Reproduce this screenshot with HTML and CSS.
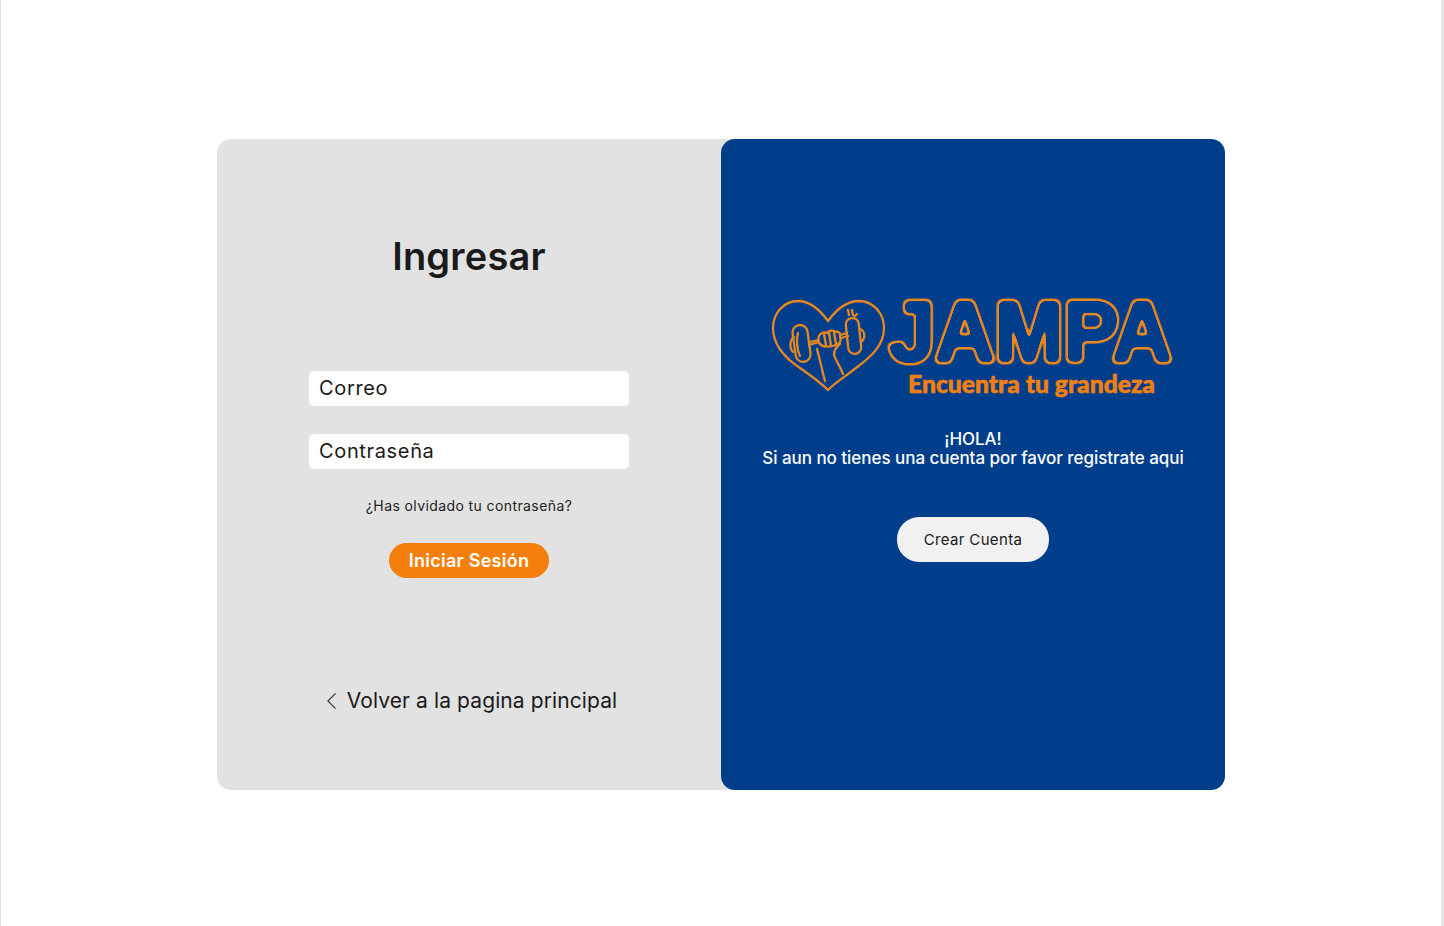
FILE: index.html
```html
<!DOCTYPE html>
<html lang="es">
<head>
<meta charset="utf-8">
<title>Ingresar - Jampa</title>
<link rel="stylesheet" href="styles.css">
</head>
<body>
<main class="page">
  <section class="card">
    <div class="panel-left">
      <h1 class="title">Ingresar</h1>
      <form class="form">
        <input class="field" type="text" placeholder="Correo">
        <input class="field" type="password" placeholder="Contraseña">
        <a class="forgot" href="#">¿Has olvidado tu contraseña?</a>
        <button class="btn-login" type="button">Iniciar Sesión</button>
      </form>
      <a class="back" href="#">
        <svg class="back-icon" viewBox="0 0 12 20"><path d="M10.500 1.500 2 10l8.500 8.500"/></svg>
        <span>Volver a la pagina principal</span>
      </a>
    </div>
    <div class="panel-right">
      <svg class="logo" viewBox="770 295 410 108">
        <defs>
          <filter id="bubble" x="-5%" y="-20%" width="110%" height="140%" color-interpolation-filters="sRGB">
            <feGaussianBlur in="SourceAlpha" stdDeviation="2.600" result="soft"/>
            <feComponentTransfer in="soft" result="outer"><feFuncA type="linear" slope="14" intercept="-0.500"/></feComponentTransfer>
            <feComponentTransfer in="soft" result="inner"><feFuncA type="linear" slope="14" intercept="-4"/></feComponentTransfer>
            <feComposite in="outer" in2="inner" operator="out" result="ring"/>
            <feFlood flood-color="#e8861f"/>
            <feComposite in2="ring" operator="in"/>
          </filter>
        </defs>
        <g class="logo-line">
          <path d="M828 321C820 310 810 301 798 301C784 301 773 313 773 328C773 345 785 358 800 368C810 375 820 382 828 390C836 382 846 376 856 368C872 356 884 345 884 328C884 313 873 301 859 301C846 301 836 310 828 321Z"/>
          <rect x="794" y="325" width="15" height="37" rx="7.500" transform="rotate(-8 801 343)"/>
          <path d="M798 333C796 339 797 350 800 356"/>
          <path d="M794 337C790 339 789 348 793 352"/>
          <rect x="847" y="318" width="13" height="36" rx="6.500" transform="rotate(-6 853 336)"/>
          <path d="M860 329C865 331 866 338 861 342"/>
          <path d="M809 345 819 342M810 342 818 340M840 335 847 333M841 338 848 336"/>
          <path d="M819 336C821 332 825 332 827 333C829 330 834 330 836 332C839 331 841 334 840 337C842 341 839 344 836 345C830 347 824 347 821 345C818 343 818 339 819 336Z"/>
          <path d="M824 334 826 345M829 332 831 346M834 332 836 344"/>
          <path d="M817 349C820 360 822 370 825 381M840 344C836 347 834 350 834 355C836 361 840 366 843 374"/>
          <path d="M848 310 849 315M852 310 853 315M857 314 855 316"/>
        </g>
        <text class="jampa" x="889" y="361" textLength="283" lengthAdjust="spacingAndGlyphs" filter="url(#bubble)">JAMPA</text>
        <text class="slogan" x="908" y="393" textLength="247" lengthAdjust="spacingAndGlyphs">Encuentra tu grandeza</text>
      </svg>
      <p class="greeting">¡HOLA!<br>Si aun no tienes una cuenta por favor registrate aqui</p>
      <button class="btn-create" type="button">Crear Cuenta</button>
    </div>
  </section>
</main>
</body>
</html>
```
FILE: styles.css
```css
* { box-sizing: border-box; }
html, body { margin: 0; height: 100%; background: #fff; overflow: hidden; }
body { font-family: Inter, "Open Sans", sans-serif; color: #1a1a1a; }
.page {
  height: 926px;
  display: flex;
  justify-content: center;
  align-items: flex-start;
  padding-top: 139px;
  border-left: 1px solid #e3e3e3;
  border-right: 3px solid #e6e6e6;
}
.card {
  width: 1008px;
  height: 651px;
  display: flex;
}
.panel-left {
  flex: none;
  width: 518px;
  margin-right: -14px;
  padding: 94px 14px 0 0;
  background: #e2e2e2;
  border-radius: 14px 0 0 14px;
  display: flex;
  flex-direction: column;
  align-items: center;
}
.title {
  margin: 0;
  font-size: 38px;
  line-height: 46px;
  font-weight: 600;
  letter-spacing: .2px;
}
.form {
  display: flex;
  flex-direction: column;
  align-items: center;
  margin-top: 92px;
}
.field {
  width: 320px;
  height: 35px;
  border: 0;
  border-radius: 5px;
  background: #fff;
  padding: 0 10px 2px;
  font: 400 20px Inter, sans-serif;
  letter-spacing: .65px;
  outline: 0;
}
.field + .field { margin-top: 28px; }
.field::placeholder { color: #1a1a1a; opacity: 1; }
.forgot {
  margin-top: 28px;
  font-size: 14px;
  line-height: 18px;
  letter-spacing: .4px;
  color: #222;
  text-decoration: none;
}
.btn-login {
  margin-top: 28px;
  width: 160px;
  height: 35px;
  border: 0;
  border-radius: 18px;
  background: #f57f0c;
  color: #fff;
  font: 600 18px Inter, sans-serif;
  letter-spacing: .25px;
}
.back {
  margin: 110px 0 0 5px;
  display: flex;
  align-items: center;
  gap: 10px;
  font-size: 21px;
  line-height: 26px;
  letter-spacing: .1px;
  color: #1a1a1a;
  text-decoration: none;
}
.back-icon {
  width: 11px;
  height: 18px;
  fill: none;
  stroke: #333;
  stroke-width: 1.300;
}
.panel-right {
  flex: none;
  width: 504px;
  background: #003e8c;
  border-radius: 14px;
  display: flex;
  flex-direction: column;
  align-items: center;
  padding-top: 156px;
  color: #fff;
  position: relative;
}
.logo { width: 410px; height: 108px; display: block; margin-left: 4px; flex: none; }
.logo-line { fill: none; stroke: #e8861f; stroke-width: 2.300; stroke-linecap: round; stroke-linejoin: round; }
.jampa { font: 700 85px "Liberation Sans", sans-serif; fill: #000; }
.slogan { font: 900 24px Lato, sans-serif; fill: #f17f12; stroke: #f17f12; stroke-width: .6px; }
.greeting {
  margin: 27px 0 0;
  text-align: center;
  font-size: 17px;
  line-height: 19px;
  font-weight: 500;
  letter-spacing: -.04px;
}
.btn-create {
  margin-top: 49px;
  width: 152px;
  height: 45px;
  border: 0;
  border-radius: 22px;
  background: #f1f1f1;
  color: #1a1a1a;
  font: 400 15px Inter, sans-serif;
  letter-spacing: .35px;
}
```
